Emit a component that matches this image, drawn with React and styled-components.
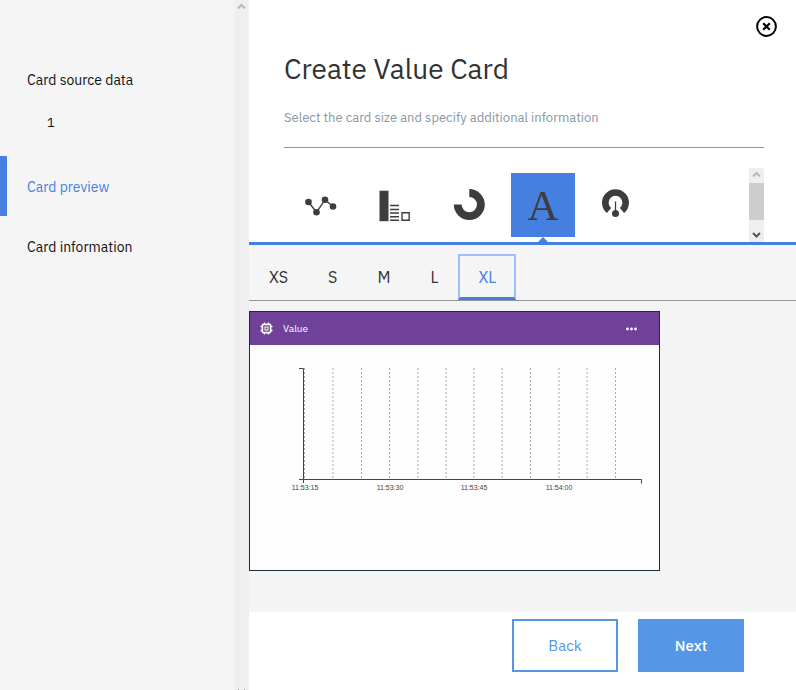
import React, { useState } from "react";
import styled, { createGlobalStyle } from "styled-components";

const BLUE = "#4580e0";
const INK = "#3d3d3c";

const GlobalStyle = createGlobalStyle`
  *, *::before, *::after { box-sizing: border-box; }
  body { margin: 0; background: #fff; color: #152935; font-family: "IBM Plex Sans", Roboto, "Liberation Sans", sans-serif; }
  button { font-family: inherit; margin: 0; border: 0; padding: 0; background: none; cursor: pointer; }
  svg { display: block; }
`;

const Page = styled.div`
  display: flex;
  min-height: 100vh;
`;

const Sidebar = styled.aside`
  display: flex;
  flex: 0 0 249px;
  background: #f5f5f5;
`;

const Steps = styled.nav`
  flex: 1;
  padding-top: 49px;
`;

const Step = styled.button`
  display: block;
  width: 100%;
  height: 60px;
  padding: 2px 0 0 20px;
  border-left: 7px solid ${(p) => (p.$active ? BLUE : "transparent")};
  color: ${(p) => (p.$active ? BLUE : "#111")};
  font-size: 14px;
  line-height: 20px;
  text-align: left;
`;

const SubStep = styled.p`
  margin: 0;
  height: 47px;
  padding: 4px 0 0 47px;
  color: #111;
  font-size: 13px;
  line-height: 20px;
`;

const Track = styled.div`
  display: flex;
  flex-direction: column;
  justify-content: space-between;
  width: 15px;
  background: #efefef;
  overflow: hidden;
`;

const PageTrack = styled(Track)`
  height: 100vh;
  min-height: 100%;
`;

const PickerTrack = styled(Track)`
  flex: none;
  margin-right: 32px;
  height: 74px;
`;

const Thumb = styled.div`
  height: 37px;
  margin-bottom: 7px;
  background: #cdcdcd;
`;

const ArrowSvg = styled.svg`
  flex: none;
  width: 15px;
  height: ${(p) => (p.$clipped ? "2px" : "15px")};
`;

const Main = styled.main`
  display: flex;
  flex: 1;
  flex-direction: column;
  min-width: 0;
`;

const Header = styled.header`
  display: flex;
  height: 168px;
  padding-left: 35px;
`;

const Heading = styled.div`
  flex: 1;
  height: 148px;
  padding-top: 51px;
  border-bottom: 1px solid #8c969c;
`;

const Title = styled.h1`
  margin: 0;
  color: #323232;
  font-size: 28px;
  font-weight: 400;
  line-height: 36px;
`;

const Subtitle = styled.p`
  margin: 21px 0 0;
  color: #8897a2;
  font-size: 13px;
  line-height: 20px;
`;

const CloseSlot = styled.div`
  width: 32px;
  padding-top: 15px;
`;

const CloseButton = styled.button`
  width: 24px;
  height: 24px;
  margin-left: -10px;
`;

const TypePicker = styled.div`
  display: flex;
  height: 77px;
  border-bottom: 3px solid ${BLUE};
`;

const Types = styled.div`
  display: flex;
  flex: 1;
  gap: 10px;
  padding: 5px 0 0 40px;
`;

const TypeButton = styled.button`
  position: relative;
  width: 64px;
  height: 64px;
  background: ${(p) => (p.$active ? BLUE : "transparent")};
  color: ${INK};

  &::after {
    content: "";
    position: absolute;
    top: 100%;
    left: 26px;
    display: ${(p) => (p.$active ? "block" : "none")};
    border: 6px solid transparent;
    border-top: 0;
    border-bottom-color: ${BLUE};
  }
`;

const Letter = styled.span`
  display: block;
  padding-top: 2px;
  font-family: "Liberation Serif", serif;
  font-size: 43px;
  font-weight: 400;
  line-height: 62px;
`;

const Sizes = styled.div`
  display: flex;
  align-items: flex-end;
  height: 56px;
  background: #f5f5f5;
  border-bottom: 1px solid #8c969c;
`;

const SizeButton = styled.button`
  height: 46px;
  padding: 0 ${(p) => (p.$active ? 18 : 20)}px;
  border: ${(p) => (p.$active ? "2px solid #9dbff8" : "0")};
  border-bottom: ${(p) => (p.$active ? `3px solid ${BLUE}` : "0")};
  color: ${(p) => (p.$active ? BLUE : "#323232")};
  font-size: 16px;
  line-height: 20px;
`;

const Preview = styled.section`
  flex: 1;
  padding: 10px 0 40px;
  background: #f4f4f4;
`;

const Card = styled.article`
  width: 411px;
  max-width: 100%;
  border: 1px solid #1b2f3b;
  background: #fdfdfd;
`;

const CardHeader = styled.header`
  display: flex;
  align-items: center;
  gap: 10px;
  height: 33px;
  padding: 0 20px 0 10px;
  background: #704198;
  color: #fff;
`;

const CardTitle = styled.h2`
  flex: 1;
  margin: 0;
  font-size: 10px;
  font-weight: 400;
  line-height: 16px;
`;

const Chart = styled.svg`
  width: 100%;
  height: 225px;

  text {
    fill: #444;
    font-family: "Liberation Sans", Arial, sans-serif;
    font-size: 7px;
    text-anchor: middle;
  }
`;

const Footer = styled.footer`
  display: flex;
  justify-content: flex-end;
  gap: 20px;
  padding: 7px 52px 18px;
`;

const ActionButton = styled.button`
  width: 106px;
  height: 53px;
  border: 2px solid #5596e6;
  background: ${(p) => (p.$primary ? "#5596e6" : "#fff")};
  color: ${(p) => (p.$primary ? "#fff" : "#5596e6")};
  font-size: 15px;
  font-weight: ${(p) => (p.$primary ? 500 : 400)};
  line-height: 20px;
`;

function Arrow({ down, muted, clipped }) {
  return (
    <ArrowSvg viewBox={clipped ? "0 0 15 2" : "0 0 15 15"} $clipped={clipped} aria-hidden="true">
      {clipped ? (
        <path d="M4 1h1v1H4zM10 1h1v1h-1z" fill="#aaa" />
      ) : (
        <path
          d={down ? "M4 6l3.5 3.5 3.5-3.5" : "M4 8.5l3.5-3.5 3.5 3.5"}
          fill="none"
          stroke={muted ? "#b9b9b9" : "#555"}
          strokeWidth="2"
        />
      )}
    </ArrowSvg>
  );
}

function LineIcon() {
  return (
    <svg width="64" height="64" fill="currentColor" aria-hidden="true">
      <path d="M19.5 29L27.5 39.3 36 26.7 44 33.5" fill="none" stroke="currentColor" strokeWidth="1.4" />
      <circle cx="19.5" cy="29" r="3.3" />
      <circle cx="27.5" cy="39.3" r="3.3" />
      <circle cx="36" cy="26.7" r="3.3" />
      <circle cx="44" cy="33.5" r="3.3" />
    </svg>
  );
}

function BarsIcon() {
  return (
    <svg width="64" height="64" fill="currentColor" aria-hidden="true">
      <path d="M16.5 17.7h9v30.5h-9z" />
      <path d="M27 32.5h9M27 36.5h9M27 40h9M27 43.8h9M27 47.3h9" stroke="currentColor" strokeWidth="1.4" />
      <path d="M39 39.7h7.2v7.6H39z" fill="none" stroke="currentColor" strokeWidth="1.4" />
    </svg>
  );
}

function DonutIcon() {
  return (
    <svg width="64" height="64" aria-hidden="true">
      <path d="M32.3 20A11.6 11.6 0 1 1 20.7 31.6" fill="none" stroke="currentColor" strokeWidth="7.8" />
    </svg>
  );
}

function GaugeIcon() {
  return (
    <svg width="64" height="64" fill="currentColor" aria-hidden="true">
      <path d="M24 37.5A10.2 10.2 0 1 1 37 37.5" fill="none" stroke="currentColor" strokeWidth="6.6" />
      <path d="M30.5 28.5V40" stroke="currentColor" strokeWidth="1.3" />
      <circle cx="30.5" cy="40.5" r="3.5" />
    </svg>
  );
}

function ChipIcon() {
  return (
    <svg width="13" height="13" viewBox="0 0 13 13" fill="none" stroke="currentColor" aria-hidden="true">
      <rect x="2.4" y="2.4" width="8.2" height="8.2" rx="1" strokeWidth="1.6" />
      <rect x="5" y="5" width="3" height="3" strokeWidth="1" />
      <path d="M4.5 .5v2M8.5 .5v2M4.5 10.5v2M8.5 10.5v2M.5 4.5h2M.5 8.5h2M10.5 4.5h2M10.5 8.5h2" strokeWidth="1.3" />
    </svg>
  );
}

const types = [
  { name: "Line", icon: <LineIcon /> },
  { name: "Bar", icon: <BarsIcon /> },
  { name: "Donut", icon: <DonutIcon /> },
  { name: "Value", icon: <Letter>A</Letter> },
  { name: "Gauge", icon: <GaugeIcon /> },
];

const sizes = ["XS", "S", "M", "L", "XL"];

const gridLines = [54.5, 83, 111.5, 139.5, 168, 196, 224, 252, 280.5, 309, 337, 365.5];

const timeLabels = [
  { x: 55, text: "11:53:15" },
  { x: 140, text: "11:53:30" },
  { x: 224, text: "11:53:45" },
  { x: 309, text: "11:54:00" },
];

function ValueChart() {
  return (
    <Chart viewBox="0 0 409 225" role="img" aria-label="Value over time">
      {gridLines.map((x) => (
        <path key={x} d={`M${x} 23V134`} stroke="#aaa" strokeDasharray="2 2" />
      ))}
      <path d="M49 23.5h4.5V138M49 134.5h342.5v4" fill="none" stroke="#444" />
      {timeLabels.map((label) => (
        <text key={label.text} x={label.x} y="145">{label.text}</text>
      ))}
    </Chart>
  );
}

export default function App() {
  const [type, setType] = useState("Value");
  const [size, setSize] = useState("XL");

  return (
    <>
      <GlobalStyle />
      <Page>
        <Sidebar>
          <Steps aria-label="Steps">
            <Step>Card source data</Step>
            <SubStep>1</SubStep>
            <Step $active aria-current="step">Card preview</Step>
            <Step>Card information</Step>
          </Steps>
          <PageTrack>
            <Arrow muted />
            <Arrow clipped />
          </PageTrack>
        </Sidebar>
        <Main>
          <Header>
            <Heading>
              <Title>Create Value Card</Title>
              <Subtitle>Select the card size and specify additional information</Subtitle>
            </Heading>
            <CloseSlot>
              <CloseButton aria-label="Close">
                <svg width="24" height="24" fill="none" stroke="#000" aria-hidden="true">
                  <circle cx="12.5" cy="11.5" r="9.4" strokeWidth="2" />
                  <path d="M9.2 8.2l6.6 6.6M15.8 8.2l-6.6 6.6" strokeWidth="2.2" />
                </svg>
              </CloseButton>
            </CloseSlot>
          </Header>
          <TypePicker>
            <Types>
              {types.map((t) => (
                <TypeButton
                  key={t.name}
                  $active={t.name === type}
                  aria-pressed={t.name === type}
                  aria-label={t.name}
                  onClick={() => setType(t.name)}
                >
                  {t.icon}
                </TypeButton>
              ))}
            </Types>
            <PickerTrack>
              <Arrow muted />
              <Thumb />
              <Arrow down />
            </PickerTrack>
          </TypePicker>
          <Sizes>
            {sizes.map((s) => (
              <SizeButton key={s} $active={s === size} aria-pressed={s === size} onClick={() => setSize(s)}>
                {s}
              </SizeButton>
            ))}
          </Sizes>
          <Preview>
            <Card>
              <CardHeader>
                <ChipIcon />
                <CardTitle>Value</CardTitle>
                <button aria-label="Card menu">
                  <svg width="16" height="12" fill="#fff" aria-hidden="true">
                    <circle cx="4.5" cy="6" r="1.4" />
                    <circle cx="8.5" cy="6" r="1.4" />
                    <circle cx="12.5" cy="6" r="1.4" />
                  </svg>
                </button>
              </CardHeader>
              <ValueChart />
            </Card>
          </Preview>
          <Footer>
            <ActionButton>Back</ActionButton>
            <ActionButton $primary>Next</ActionButton>
          </Footer>
        </Main>
      </Page>
    </>
  );
}
